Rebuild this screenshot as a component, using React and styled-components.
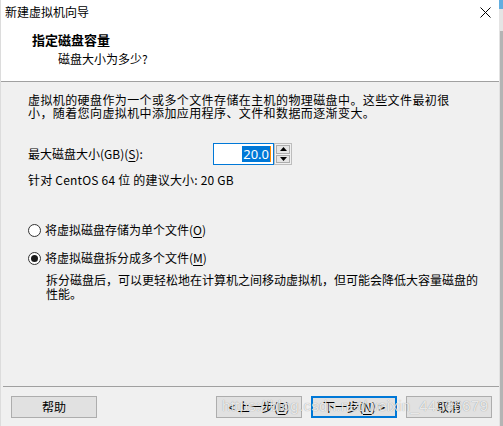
import React from "react";
import styled, { createGlobalStyle } from "styled-components";

const Global = createGlobalStyle`
  * { box-sizing: border-box; }
  html, body { margin: 0; padding: 0; }
  body {
    background: #f0f0f0;
    font-family: "Noto Sans CJK SC", "Noto Sans", sans-serif;
    font-size: 12px;
    color: #000;
  }
`;

const Window = styled.div`
  position: relative;
  display: flex;
  width: 503px;
  height: 426px;
  overflow: hidden;
`;

const Dialog = styled.div`
  flex: 1;
  display: flex;
  flex-direction: column;
  background: #f0f0f0;
  border-left: 1px solid #dcdcdc;
`;

const EdgeStrip = styled.div`
  width: 4px;
  display: flex;
  flex-direction: column;
`;

const EdgePart = styled.div`
  height: ${(p) => (p.$h ? `${p.$h}px` : "auto")};
  flex: ${(p) => (p.$h ? "none" : 1)};
  background: ${(p) => p.$bg};
  border-left: 1px solid ${(p) => p.$edge || p.$bg};
`;

const TitleBar = styled.div`
  height: 24px;
  background: #fff;
  display: flex;
  align-items: center;
  justify-content: space-between;
  padding: 0 8px 0 4px;
`;

const TitleText = styled.span`
  font-size: 12px;
  line-height: 16px;
`;

const Header = styled.div`
  height: 58px;
  background: #fff;
  border-bottom: 1px solid #a0a0a0;
  padding: 8px 0 0 31px;
  display: flex;
  flex-direction: column;
  gap: 3px;
`;

const Heading = styled.div`
  font-weight: 700;
  font-size: 13px;
  line-height: 16px;
`;

const SubHeading = styled.div`
  padding-left: 26px;
  font-size: 12px;
  line-height: 16px;
`;

const Body = styled.div`
  flex: 1;
  padding: 11px 0 0 27px;
  display: flex;
  flex-direction: column;
`;

const Paragraph = styled.p`
  margin: 0;
  font-size: 12px;
  line-height: 13px;
  letter-spacing: 0.4px;
`;

const SizeRow = styled.div`
  margin-top: 24px;
  display: flex;
  align-items: center;
  height: 22px;
`;

const SizeLabel = styled.span`
  width: 185px;
  line-height: 16px;
`;

const NumberBox = styled.div`
  width: 61px;
  height: 22px;
  background: #fff;
  border: 1px solid #0078d7;
  display: flex;
  align-items: center;
  justify-content: flex-end;
  padding-right: 2px;
`;

const Selected = styled.span`
  background: #0078d7;
  color: #fff;
  font-family: "Noto Sans", sans-serif;
  font-size: 13px;
  line-height: 16px;
  padding: 0 1px;
  border-right: 1px solid #ff8c00;
`;

const Spinner = styled.div`
  width: 18px;
  height: 22px;
  border: 1px solid #bdbdbd;
  padding: 1px;
  display: flex;
  flex-direction: column;
  gap: 1px;
`;

const SpinButton = styled.div`
  flex: 1;
  border: 1px solid #adadad;
  background: #e5e5e5;
  display: flex;
  align-items: center;
  justify-content: center;
`;

const Recommend = styled.div`
  margin-top: 8px;
  line-height: 14px;
  letter-spacing: 0.2px;
`;

const RadioRow = styled.div`
  margin-top: ${(p) => p.$mt}px;
  display: flex;
  align-items: center;
  gap: 4px;
  line-height: 16px;
`;

const RadioDot = styled.span`
  width: 13px;
  height: 13px;
  border-radius: 50%;
  border: 1px solid #333;
  background: #fff;
  display: flex;
  align-items: center;
  justify-content: center;
  &::after {
    content: "";
    width: 7px;
    height: 7px;
    border-radius: 50%;
    background: ${(p) => (p.$checked ? "#1a1a1a" : "transparent")};
  }
`;

const Key = styled.span`
  text-decoration: underline;
  text-underline-offset: 2px;
`;

const Description = styled.p`
  margin: 7px 0 0 18px;
  line-height: 14px;
`;

const Footer = styled.div`
  height: 40px;
  margin-left: 2px;
  border-top: 1px solid #a0a0a0;
  padding: 9px 7px 0 8px;
  display: flex;
  align-items: flex-start;
`;

const Spacer = styled.div`
  flex: 1;
`;

const ButtonGroup = styled.div`
  display: flex;
  gap: 9px;
`;

const Button = styled.button`
  width: 86px;
  height: 22px;
  margin: 0;
  padding: 0;
  background: #e1e1e1;
  border: ${(p) => (p.$default ? "2px solid #0078d7" : "1px solid #adadad")};
  font-family: "Noto Sans CJK SC", "Noto Sans", sans-serif;
  font-size: 12px;
  line-height: 16px;
  color: #000;
`;

const Watermark = styled.div`
  position: absolute;
  left: 222px;
  top: 397px;
  font-family: "Liberation Sans", Arial, sans-serif;
  font-size: 15px;
  line-height: 18px;
  letter-spacing: 0.3px;
  color: rgba(255, 255, 255, 0.8);
  text-shadow: 0 0 1px rgba(0, 0, 0, 0.4);
  pointer-events: none;
  white-space: nowrap;
`;

const CloseIcon = () => (
  <svg width="11" height="11" viewBox="0 0 11 11">
    <path d="M0.5 0.5 L10.5 10.5 M10.5 0.5 L0.5 10.5" stroke="#000" strokeWidth="1" fill="none" />
  </svg>
);

const Arrow = ({ up }) => (
  <svg width="7" height="4" viewBox="0 0 7 4">
    <path d={up ? "M0 4 L3.5 0 L7 4 Z" : "M0 0 L7 0 L3.5 4 Z"} fill="#000" />
  </svg>
);

export default function App() {
  return (
    <>
      <Global />
      <Window>
        <Dialog>
          <TitleBar>
            <TitleText>新建虚拟机向导</TitleText>
            <CloseIcon />
          </TitleBar>
          <Header>
            <Heading>指定磁盘容量</Heading>
            <SubHeading>磁盘大小为多少?</SubHeading>
          </Header>
          <Body>
            <Paragraph>
              虚拟机的硬盘作为一个或多个文件存储在主机的物理磁盘中。这些文件最初很
              <br />
              小，随着您向虚拟机中添加应用程序、文件和数据而逐渐变大。
            </Paragraph>
            <SizeRow>
              <SizeLabel>
                最大磁盘大小(GB)(<Key>S</Key>):
              </SizeLabel>
              <NumberBox>
                <Selected>20.0</Selected>
              </NumberBox>
              <Spinner>
                <SpinButton>
                  <Arrow up />
                </SpinButton>
                <SpinButton>
                  <Arrow />
                </SpinButton>
              </Spinner>
            </SizeRow>
            <Recommend>针对 CentOS 64 位 的建议大小: 20 GB</Recommend>
            <RadioRow $mt={35}>
              <RadioDot />
              <span>
                将虚拟磁盘存储为单个文件(<Key>O</Key>)
              </span>
            </RadioRow>
            <RadioRow $mt={12}>
              <RadioDot $checked />
              <span>
                将虚拟磁盘拆分成多个文件(<Key>M</Key>)
              </span>
            </RadioRow>
            <Description>
              拆分磁盘后，可以更轻松地在计算机之间移动虚拟机，但可能会降低大容量磁盘的
              <br />
              性能。
            </Description>
          </Body>
          <Footer>
            <Button>帮助</Button>
            <Spacer />
            <ButtonGroup>
              <Button>
                &lt; 上一步(<Key>B</Key>)
              </Button>
              <Button $default>
                下一步(<Key>N</Key>) &gt;
              </Button>
              <Button>取消</Button>
            </ButtonGroup>
          </Footer>
        </Dialog>
        <EdgeStrip>
          <EdgePart $h={9} $bg="#62aee0" />
          <EdgePart $h={22} $bg="#e4e4e4" />
          <EdgePart $bg="#b4b4b4" $edge="#e2e2e2" />
        </EdgeStrip>
        <Watermark>https://blog.csdn.net/weixin_44386679</Watermark>
      </Window>
    </>
  );
}
